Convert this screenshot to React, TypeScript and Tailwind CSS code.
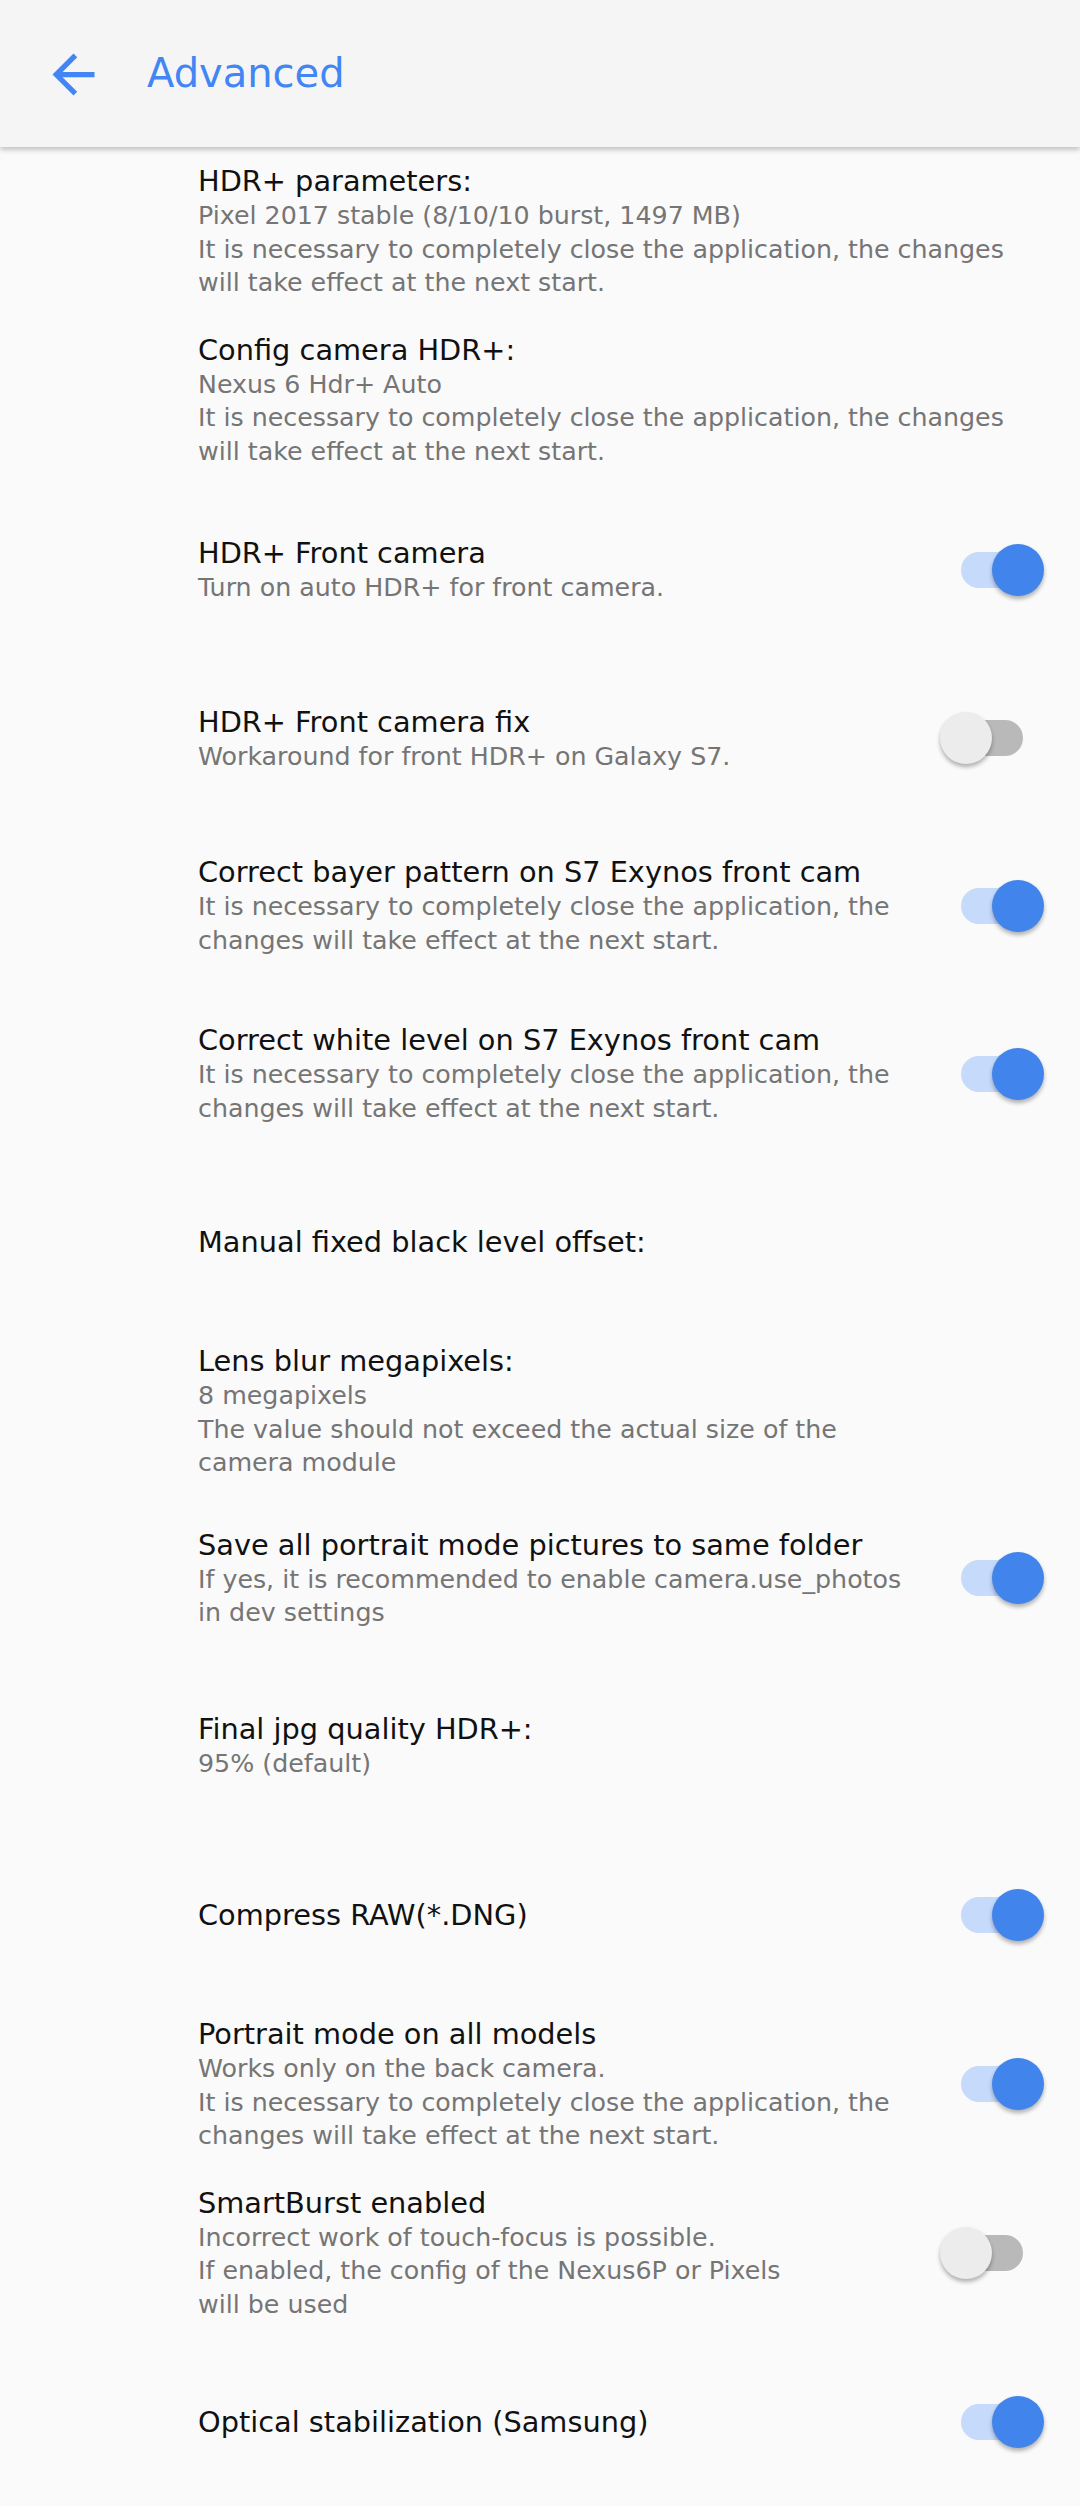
import React from "react";

type Pref = {
	title: string;
	lines: string[];
	toggle?: "on" | "off";
	gap: string;
};

const restart1 = "It is necessary to completely close the application, the changes";
const restart2 = "will take effect at the next start.";
const narrow1 = "It is necessary to completely close the application, the";
const narrow2 = "changes will take effect at the next start.";

const prefs: Pref[] = [
	{ title: "HDR+ parameters:", lines: ["Pixel 2017 stable (8/10/10 burst, 1497 MB)", restart1, restart2], gap: "mt-[16px]" },
	{ title: "Config camera HDR+:", lines: ["Nexus 6 Hdr+ Auto", restart1, restart2], gap: "mt-[32px]" },
	{ title: "HDR+ Front camera", lines: ["Turn on auto HDR+ for front camera."], toggle: "on", gap: "mt-[67px]" },
	{ title: "HDR+ Front camera fix", lines: ["Workaround for front HDR+ on Galaxy S7."], toggle: "off", gap: "mt-[99px]" },
	{ title: "Correct bayer pattern on S7 Exynos front cam", lines: [narrow1, narrow2], toggle: "on", gap: "mt-[81px]" },
	{ title: "Correct white level on S7 Exynos front cam", lines: [narrow1, narrow2], toggle: "on", gap: "mt-[65px]" },
	{ title: "Manual fixed black level offset:", lines: [], gap: "mt-[99px]" },
	{
		title: "Lens blur megapixels:",
		lines: ["8 megapixels", "The value should not exceed the actual size of the", "camera module"],
		gap: "mt-[83px]",
	},
	{
		title: "Save all portrait mode pictures to same folder",
		lines: ["If yes, it is recommended to enable camera.use_photos", "in dev settings"],
		toggle: "on",
		gap: "mt-[47px]",
	},
	{ title: "Final jpg quality HDR+:", lines: ["95% (default)"], gap: "mt-[81px]" },
	{ title: "Compress RAW(*.DNG)", lines: [], toggle: "on", gap: "mt-[117px]" },
	{
		title: "Portrait mode on all models",
		lines: ["Works only on the back camera.", narrow1, narrow2],
		toggle: "on",
		gap: "mt-[83px]",
	},
	{
		title: "SmartBurst enabled",
		lines: ["Incorrect work of touch-focus is possible.", "If enabled, the config of the Nexus6P or Pixels", "will be used"],
		toggle: "off",
		gap: "mt-[32px]",
	},
	{ title: "Optical stabilization (Samsung)", lines: [], toggle: "on", gap: "mt-[83px]" },
];

function Toggle({ on }: { on: boolean }) {
	return (
		<div className={`relative w-[62px] h-[36px] rounded-full ${on ? "bg-[#c6dafc]" : "bg-[#b9b9b9]"}`}>
			<div
				className={`absolute top-1/2 -translate-y-1/2 w-[52px] h-[52px] rounded-full shadow-[0_3px_4px_rgba(0,0,0,0.3)] ${
					on ? "left-[31px] bg-[#4084ec]" : "left-[-21px] bg-[#ececec]"
				}`}
			/>
		</div>
	);
}

function PrefRow({ pref }: { pref: Pref }) {
	return (
		<div className={`flex flex-row items-center pl-[198px] pr-[57px] ${pref.gap}`}>
			<div className="flex-1 flex flex-col">
				<div className="text-[28.8px] leading-[36px] text-[#111111] whitespace-nowrap">{pref.title}</div>
				{pref.lines.map((line, i) => (
					<div key={i} className="text-[25.3px] leading-[33.5px] text-[#757575] whitespace-nowrap">
						{line}
					</div>
				))}
			</div>
			{pref.toggle && <Toggle on={pref.toggle === "on"} />}
		</div>
	);
}

export default function App() {
	return (
		<div className="min-h-[2506px] bg-[#fafafa] font-['DejaVu_Sans',sans-serif]">
			<header className="relative z-10 h-[147px] bg-[#f5f5f5] flex flex-row items-center shadow-[0_3px_5px_rgba(0,0,0,0.22)]">
				<svg viewBox="0 0 24 24" className="w-[63px] h-[63px] ml-[42px] mt-[2px] fill-[#4285f4]">
					<path d="M20 11H7.83l5.59-5.59L12 4l-8 8 8 8 1.41-1.41L7.83 13H20v-2z" />
				</svg>
				<h1 className="ml-[42px] text-[40px] leading-none text-[#4285f4] -mt-[2px]">Advanced</h1>
			</header>
			<div className="flex flex-col pb-[60px]">
				{prefs.map((p) => (
					<PrefRow key={p.title} pref={p} />
				))}
			</div>
		</div>
	);
}
